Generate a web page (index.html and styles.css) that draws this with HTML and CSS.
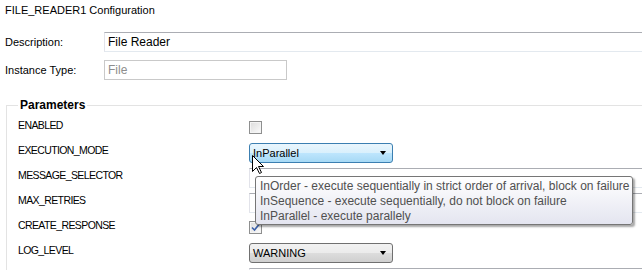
FILE: index.html
```html
<!DOCTYPE html>
<html lang="en">
  <head>
    <meta charset="UTF-8" />
    <meta content="width=device-width, initial-scale=1.0" name="viewport" />
    <link rel="stylesheet" href="styles.css">
  </head>
  <body>
    <div class="page">
      <div class="title">FILE_READER1 Configuration</div>

      <div class="form-row">
        <span class="form-label">Description:</span>
        <div class="text-input wide">File Reader</div>
      </div>
      <div class="form-row">
        <span class="form-label">Instance Type:</span>
        <div class="text-input short disabled">File</div>
      </div>

      <fieldset class="params">
        <legend>Parameters</legend>
        <div class="param-row">
          <span class="param-label">ENABLED</span>
          <span class="checkbox"></span>
        </div>
        <div class="param-row">
          <span class="param-label">EXECUTION_MODE</span>
          <div class="select hover">
            <span>InParallel</span>
            <span class="arrow"></span>
          </div>
        </div>
        <div class="param-row">
          <span class="param-label">MESSAGE_SELECTOR</span>
          <div class="text-input param-input"></div>
        </div>
        <div class="param-row">
          <span class="param-label">MAX_RETRIES</span>
          <div class="text-input param-input"></div>
        </div>
        <div class="param-row">
          <span class="param-label">CREATE_RESPONSE</span>
          <span class="checkbox checked">
            <svg width="9" height="9" viewBox="0 0 9 9"><path d="M1 4.5 L3.5 7 L8 1.5" fill="none" stroke="#3a5fa8" stroke-width="1.6"/></svg>
          </span>
        </div>
        <div class="param-row">
          <span class="param-label">LOG_LEVEL</span>
          <div class="select">
            <span>WARNING</span>
            <span class="arrow"></span>
          </div>
        </div>
        <div class="param-row">
          <span class="param-label"></span>
          <div class="text-input param-input"></div>
        </div>
      </fieldset>

      <!-- tooltip for EXECUTION_MODE -->
      <div class="tooltip">
        <div>InOrder - execute sequentially in strict order of arrival, block on failure</div>
        <div>InSequence - execute sequentially, do not block on failure</div>
        <div>InParallel - execute parallely</div>
      </div>

      <svg class="cursor" width="13" height="20" viewBox="0 0 13 20">
        <path d="M0.5 0.5 L0.5 16.5 L4.5 12.5 L7.5 18.5 L9.5 17.5 L6.5 11.5 L11.5 11.5 Z" fill="#fff" stroke="#000" stroke-width="1"/>
      </svg>
    </div>
  </body>
</html>
```

FILE: styles.css
```css
body {
  margin: 0;
  background: #fff;
  font-family: "Liberation Sans", Arial, sans-serif;
  font-size: 11px;
  color: #000;
}
.page {
  position: relative;
  width: 642px;
  height: 270px;
  overflow: hidden;
}
.title {
  padding: 3px 5px 0;
  line-height: 14px;
}
.form-row {
  display: flex;
  align-items: center;
  margin-top: 8px;
}
.title + .form-row {
  margin-top: 15px;
}
.form-label {
  width: 99px;
  padding-left: 5px;
}
.text-input {
  box-sizing: border-box;
  height: 20px;
  line-height: 18px;
  padding-left: 3px;
  border: 1px solid #e2e3ea;
  border-top-color: #abadb3;
  border-bottom-color: #e3e9ef;
  background: #fff;
  font-size: 12px;
}
.wide {
  flex: 1;
  margin-right: -20px;
}
.short {
  width: 183px;
}
.disabled {
  color: #8d8d8d;
  border-color: #c9c9c9;
}
.params {
  margin: 18px -20px 0 6px;
  padding: 3px 0 0 11px;
  border: 1px solid #e3e3e3;
  border-bottom: none;
}
.params legend {
  padding: 0 2px;
  line-height: 14px;
  font-weight: bold;
  font-size: 12px;
}
.param-row {
  display: flex;
  align-items: center;
  height: 25px;
}
.param-label {
  width: 231px;
  flex: none;
  padding-bottom: 5px;
  font-size: 10.5px;
  letter-spacing: -0.6px;
}
.checkbox {
  box-sizing: border-box;
  width: 13px;
  height: 13px;
  border: 1px solid #8e8f8f;
  background: linear-gradient(135deg, #dcdcdc, #fbfbfb);
  box-shadow: inset 0 0 0 1px #f4f4f4;
  display: flex;
  align-items: center;
  justify-content: center;
}
.param-input {
  flex: 1;
}
.select {
  box-sizing: border-box;
  width: 144px;
  height: 20px;
  display: flex;
  align-items: center;
  justify-content: space-between;
  padding: 0 6px 0 3px;
  border: 1px solid #707070;
  border-radius: 3px;
  background: linear-gradient(#f2f2f2 0%, #ebebeb 50%, #dddddd 50%, #cfcfcf 100%);
  font-size: 11px;
}
.select.hover {
  border-color: #3c7fb1;
  background: linear-gradient(#eaf6fd 0%, #d9f0fc 50%, #bee6fd 50%, #a7d9f5 100%);
}
.arrow {
  width: 0;
  height: 0;
  border-left: 3.5px solid transparent;
  border-right: 3.5px solid transparent;
  border-top: 4px solid #000;
}
.tooltip {
  position: absolute;
  left: 255px;
  top: 176px;
  box-sizing: border-box;
  width: 378px;
  height: 49px;
  padding: 2px 0 0 4px;
  border: 1px solid #767676;
  border-radius: 3px;
  background: linear-gradient(#ffffff, #e4e5f0);
  box-shadow: 2px 2px 2px rgba(0, 0, 0, 0.35);
  color: #505050;
  font-size: 12px;
  line-height: 15px;
  white-space: nowrap;
}
.cursor {
  position: absolute;
  left: 252px;
  top: 155px;
}
```
